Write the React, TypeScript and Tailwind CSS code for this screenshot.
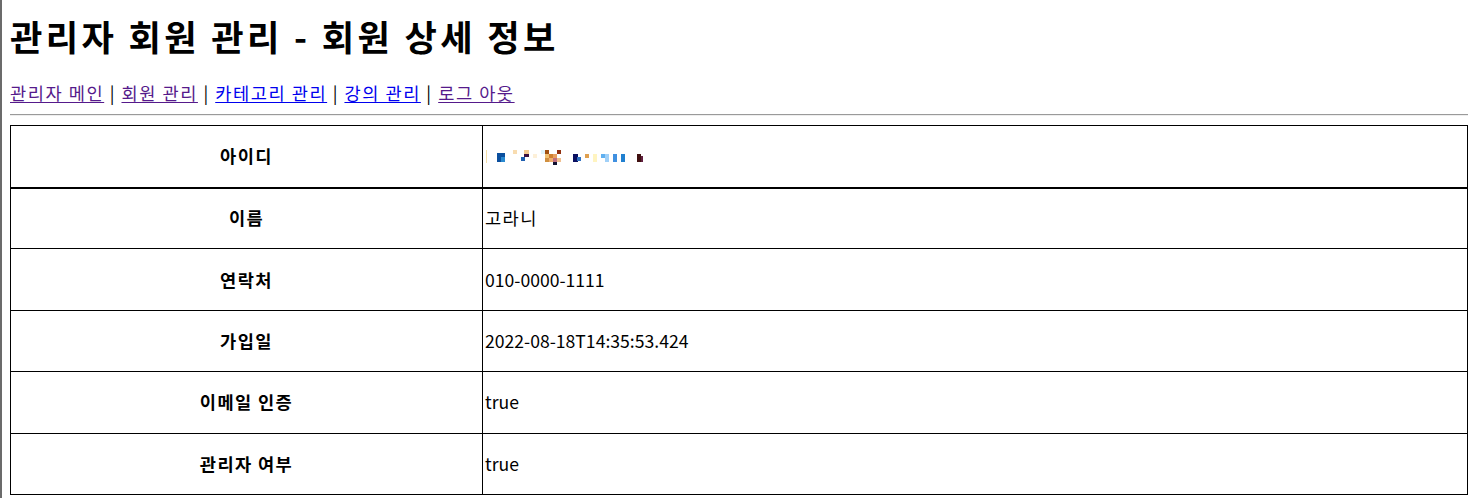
import React from "react";

const rows: { label: string; value: string | null; ko?: boolean }[] = [
  { label: "아이디", value: null },
  { label: "이름", value: "고라니", ko: true },
  { label: "연락처", value: "010-0000-1111" },
  { label: "가입일", value: "2022-08-18T14:35:53.424" },
  { label: "이메일 인증", value: "true" },
  { label: "관리자 여부", value: "true" },
];

function Mosaic() {
  const r: [number, number, number, number, string][] = [
    [0, 0, 1, 13, "#f5dfa8"],
    [11, 3, 8, 9, "#0b4f9e"],
    [15, 7, 4, 5, "#2a8ad0"],
    [27, 0, 4, 4, "#f8dcb0"],
    [38, 0, 5, 4, "#f3c98f"],
    [38, 4, 5, 3, "#3a1040"],
    [35, 7, 4, 4, "#2060b0"],
    [47, 4, 4, 4, "#fdf0d8"],
    [55, 0, 4, 4, "#e0f4f8"],
    [59, 0, 4, 4, "#a05010"],
    [59, 4, 4, 4, "#f0c070"],
    [63, 4, 4, 4, "#d08030"],
    [59, 8, 4, 4, "#d09040"],
    [63, 8, 4, 4, "#f0b070"],
    [67, 8, 4, 4, "#c07080"],
    [67, 12, 4, 3, "#101030"],
    [67, 4, 4, 4, "#e8a060"],
    [71, 0, 4, 4, "#903010"],
    [71, 8, 4, 4, "#f0c090"],
    [87, 4, 5, 8, "#0a1060"],
    [91, 7, 4, 4, "#3070c0"],
    [99, 4, 4, 4, "#e0a050"],
    [107, 4, 4, 8, "#fff4c0"],
    [115, 4, 4, 4, "#60b0f0"],
    [119, 4, 4, 8, "#a0d0f8"],
    [127, 4, 4, 8, "#4090e0"],
    [135, 4, 4, 8, "#2080d0"],
    [151, 4, 4, 8, "#401010"],
    [155, 6, 2, 6, "#602040"],
  ];
  return (
    <svg width="160" height="16" viewBox="0 0 160 16" className="ml-[1px] mt-[3px] block">
      {r.map(([x, y, w, h, c], i) => (
        <rect key={i} x={x} y={y} width={w} height={h} fill={c} />
      ))}
    </svg>
  );
}

export default function App() {
  const font = { fontFamily: '"Noto Sans CJK KR", "Noto Sans", sans-serif' };
  const link = "underline underline-offset-[2px] tracking-[1.55px]";
  return (
    <div className="flex min-h-[498px] bg-white text-black" style={font}>
      <div className="w-[2px] shrink-0 bg-[#6b6b6b]" />
      <div className="w-[1458px] pl-[8px] pt-[14px]">
        <h1 className="text-[35.2px] font-bold leading-[44px] tracking-[3.35px]">
          관리자 회원 관리 - 회원 상세 정보
        </h1>
        <div className="mt-[23px] text-[17.6px] leading-[24px]">
          <a className={`${link} text-[#551A8B]`}>관리자 메인</a>
          <span className="tracking-[1.55px]"> | </span>
          <a className={`${link} text-[#551A8B]`}>회원 관리</a>
          <span className="tracking-[1.55px]"> | </span>
          <a className={`${link} text-[#0000EE]`}>카테고리 관리</a>
          <span className="tracking-[1.55px]"> | </span>
          <a className={`${link} text-[#0000EE]`}>강의 관리</a>
          <span className="tracking-[1.55px]"> | </span>
          <a className={`${link} text-[#551A8B]`}>로그 아웃</a>
        </div>
        <div className="mt-[9px] h-[2px] w-[1458px] border-t border-t-[#9a9a9a] border-b border-b-[#eeeeee]" />
        <table className="mt-[9px] w-[1458px] border-collapse border border-black text-[17.6px]">
          <tbody>
            {rows.map((row, i) => (
              <tr
                key={i}
                className={i === 0 ? "h-[62px] border-b-2 border-black" : "h-[61.4px] border-b border-black"}
              >
                <th className="w-[472px] border-r border-black p-0 text-center align-middle font-bold leading-[24px] tracking-[1.4px]">
                  {row.label}
                </th>
                <td className={`p-0 pl-[2px] align-middle leading-[24px] ${row.ko ? "tracking-[1.4px]" : ""}`}>
                  {row.value === null ? <Mosaic /> : row.value}
                </td>
              </tr>
            ))}
          </tbody>
        </table>
      </div>
    </div>
  );
}
